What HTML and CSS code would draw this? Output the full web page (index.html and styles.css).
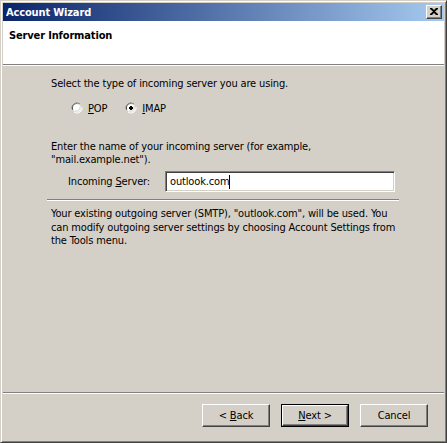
FILE: index.html
```html
<!DOCTYPE html>
<html>
<head>
<meta charset="utf-8">
<link rel="stylesheet" href="styles.css">
</head>
<body>
<div class="window">
  <div class="titlebar">
    <span class="title">Account Wizard</span>
    <span class="close">
      <svg width="8" height="7" viewBox="0 0 8 7"><path d="M0 0h2l2 2 2-2h2v1L5 3.5 8 6v1H6L4 5 2 7H0V6l3-2.5L0 1z" fill="#000"/></svg>
    </span>
  </div>
  <div class="header">Server Information</div>
  <div class="content">
    <div class="group">
      <p class="line">Select the type of incoming server you are using.</p>
      <div class="radios">
        <label class="radio">
          <svg width="12" height="12" viewBox="0 0 12 12"><path d="M1 7A5 5 0 0 1 9 2" stroke="#808080" fill="none"/><path d="M2 8A4 4 0 0 1 8 3" stroke="#404040" fill="none"/><circle cx="6" cy="6" r="4" fill="#fff"/><path d="M3 10A5 5 0 0 0 11 5" stroke="#fff" fill="none"/><path d="M4 9A4 4 0 0 0 9 4" stroke="#d4d0c8" fill="none"/></svg>
          <span><u>P</u>OP</span>
        </label>
        <label class="radio">
          <svg width="12" height="12" viewBox="0 0 12 12"><path d="M1 7A5 5 0 0 1 9 2" stroke="#808080" fill="none"/><path d="M2 8A4 4 0 0 1 8 3" stroke="#404040" fill="none"/><circle cx="6" cy="6" r="4" fill="#fff"/><path d="M3 10A5 5 0 0 0 11 5" stroke="#fff" fill="none"/><path d="M4 9A4 4 0 0 0 9 4" stroke="#d4d0c8" fill="none"/><rect x="5" y="4" width="2" height="4" fill="#000"/><rect x="4" y="5" width="4" height="2" fill="#000"/></svg>
          <span><u>I</u>MAP</span>
        </label>
      </div>
      <p class="enter">Enter the name of your incoming server (for example,<br>"mail.example.net").</p>
      <div class="field">
        <span class="flabel">Incoming <u>S</u>erver:</span>
        <span class="input"><span>outlook.com</span><span class="caret"></span></span>
      </div>
      <div class="sep"></div>
      <p class="para">Your existing outgoing server (SMTP), "outlook.com", will be used. You can modify outgoing server settings by choosing Account Settings from the Tools menu.</p>
    </div>
  </div>
  <div class="footer">
    <span class="btn"><span>&lt; <u>B</u>ack</span></span>
    <span class="btn default"><span class="inner"><span><u>N</u>ext &gt;</span></span></span>
    <span class="btn"><span>Cancel</span></span>
  </div>
</div>
</body>
</html>
```
FILE: styles.css
```css
* { box-sizing: border-box; }
html, body { margin: 0; padding: 0; background: #d4d0c8; }
body {
  font-family: "DejaVu Sans Condensed", "DejaVu Sans", sans-serif;
  font-size: 11px;
  letter-spacing: -0.15px;
  color: #000;
}
.window {
  width: 447px;
  height: 443px;
  border: 1px solid;
  border-color: #d4d0c8 #404040 #404040 #d4d0c8;
  box-shadow: inset 1px 1px #fff, inset -1px -1px #808080;
  padding: 2px;
  background: #d4d0c8;
  display: flex;
  flex-direction: column;
}
.titlebar {
  height: 18px;
  background: linear-gradient(to right, #0a246a, #a6caf0);
  display: flex;
  align-items: center;
  justify-content: space-between;
  padding: 0 2px 0 3px;
  flex: none;
}
.title {
  color: #fff;
  font-weight: bold;
  font-size: 11px;
}
.close {
  width: 16px;
  height: 14px;
  background: #d4d0c8;
  border: 1px solid;
  border-color: #fff #404040 #404040 #fff;
  box-shadow: inset -1px -1px #808080;
  display: flex;
  align-items: center;
  justify-content: center;
  padding: 0 1px 1px 0;
}
.header {
  height: 44px;
  background: #fff;
  border-bottom: 1px solid #808080;
  box-shadow: 0 1px #fff;
  font-weight: bold;
  padding: 8px 0 0 6px;
  flex: none;
}
.content {
  flex: 1;
  padding: 12px 0 0 44px;
}
.group {
  width: 352px;
}
.group p { margin: 0; padding-left: 4px; line-height: 14px; }
.radios {
  display: flex;
  gap: 18px;
  padding-left: 24px;
  margin-top: 10px;
  height: 14px;
  align-items: center;
}
.radio {
  display: flex;
  align-items: center;
  gap: 5px;
}
.radio svg { display: block; }
.enter { margin-top: 25px !important; line-height: 13px !important; }
.field {
  display: flex;
  align-items: center;
  margin-top: 5px;
  padding-left: 21px;
}
.flabel { width: 97px; }
.input {
  width: 230px;
  height: 21px;
  background: #fff;
  border: 1px solid;
  border-color: #808080 #fff #fff #808080;
  box-shadow: inset 1px 1px #404040, inset -1px -1px #d4d0c8;
  display: flex;
  align-items: center;
  padding-left: 4px;
}
.caret {
  display: inline-block;
  width: 1px;
  height: 14px;
  background: #000;
}
.sep {
  margin-top: 7px;
  height: 2px;
  border-top: 1px solid #808080;
  border-bottom: 1px solid #fff;
}
.para { margin-top: 6px !important; line-height: 13.5px !important; }
.footer {
  height: 48px;
  flex: none;
  border-top: 1px solid #808080;
  box-shadow: inset 0 1px #fff;
  display: flex;
  justify-content: flex-end;
  align-items: flex-start;
  gap: 11px;
  padding: 11px 16px 0 0;
}
.btn {
  width: 68px;
  height: 23px;
  border: 1px solid;
  border-color: #fff #404040 #404040 #fff;
  box-shadow: inset -1px -1px #808080;
  display: flex;
  align-items: center;
  justify-content: center;
}
.btn.default {
  border: 1px solid #000;
  box-shadow: none;
  padding: 0;
}
.btn.default .inner {
  width: 100%;
  height: 100%;
  border: 1px solid;
  border-color: #fff #404040 #404040 #fff;
  box-shadow: inset -1px -1px #808080;
  display: flex;
  align-items: center;
  justify-content: center;
}
```
